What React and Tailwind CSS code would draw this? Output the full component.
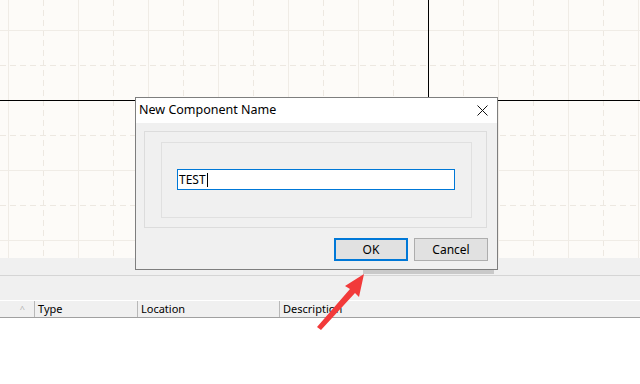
import React from "react";

function CanvasGrid() {
  const majors = [];
  const minors = [];
  for (let x = 8; x < 640; x += 70) majors.push(x);
  for (let x = 43; x < 640; x += 70) minors.push(x);
  const hMajors = [30, 100, 170, 240];
  const hMinors = [65, 135, 205];
  return (
    <svg className="absolute inset-0" width="640" height="258">
      {majors.map((x) => (
        <line key={"v" + x} x1={x + 0.5} y1="0" x2={x + 0.5} y2="258" stroke="#f0ece6" />
      ))}
      {minors.map((x) => (
        <line key={"m" + x} x1={x + 0.5} y1="0" x2={x + 0.5} y2="258" stroke="#ede8e1" strokeDasharray="6 4" />
      ))}
      {hMajors.map((y) => (
        <line key={"h" + y} x1="0" y1={y + 0.5} x2="640" y2={y + 0.5} stroke="#f0ece6" />
      ))}
      {hMinors.map((y) => (
        <line key={"n" + y} x1="0" y1={y + 0.5} x2="640" y2={y + 0.5} stroke="#ede8e1" strokeDasharray="6 4" />
      ))}
      <line x1="0" y1="100.5" x2="640" y2="100.5" stroke="#000" />
      <line x1="428.5" y1="0" x2="428.5" y2="100" stroke="#000" />
    </svg>
  );
}

function Dialog() {
  return (
    <div className="absolute left-[135px] top-[97px] w-[363px] h-[173px] border border-[#7e7e7e] bg-[#f0f0f0] flex flex-col">
      <div className="h-[25px] bg-white flex items-center justify-between pl-[3px] pr-[9px]">
        <span className="text-[12.5px] text-black">New Component Name</span>
        <svg width="11" height="11" viewBox="0 0 11 11">
          <path d="M0.5 0.5 L10.5 10.5 M10.5 0.5 L0.5 10.5" stroke="#111" strokeWidth="1" />
        </svg>
      </div>
      <div className="mt-2 ml-2 mr-[10px] h-[97px] border border-[#dcdcdc] bg-[#f0f0f0] pt-[10px] pl-4 pr-[14px]">
        <div className="h-[76px] border border-[#e0e0e0] bg-[#f0f0f0] pt-[26px] pl-[15px]">
          <div className="w-[278px] h-[21px] border border-[#0078d7] bg-white flex items-center pl-[1px]">
            <span className="text-[12px] text-black leading-none">TEST</span>
            <span className="w-[1px] h-[14px] bg-black ml-[1px]"></span>
          </div>
        </div>
      </div>
      <div className="flex justify-end gap-[6px] mt-[10px] pr-[9px]">
        <button className="w-[74px] h-[23px] bg-[#e1e1e1] border-2 border-[#0078d7] text-[12px] text-black">
          OK
        </button>
        <button className="w-[74px] h-[23px] bg-[#e1e1e1] border border-[#adadad] text-[12px] text-black">
          Cancel
        </button>
      </div>
    </div>
  );
}

function Arrow() {
  return (
    <svg className="absolute inset-0 pointer-events-none" width="640" height="384">
      <path d="M364 274 L359 297 L355 293 L321 330 L317 327 L350 289 L345 286 Z" fill="#f23a3a" />
    </svg>
  );
}

export default function App() {
  return (
    <div
      className="relative w-[640px] h-[384px] overflow-hidden bg-white flex flex-col"
      style={{ fontFamily: '"Noto Sans", "Open Sans", Arial, sans-serif' }}
    >
      <div className="relative h-[258px] bg-[#fdfbf8]">
        <CanvasGrid />
      </div>
      <div className="h-[18px] bg-[#f0f0f0] border-b border-[#d5d5d5]"></div>
      <div className="h-[25px] bg-[#f0f0f0] border-b border-white"></div>
      <div className="h-[17px] bg-[#f0f0f0] border-b border-[#a0a0a0] flex items-center text-[11px] text-black">
        <div className="w-[34px] flex justify-end pr-[9px] text-[9px] text-[#b0b0b0]">^</div>
        <div className="w-[103px] h-full border-l border-[#b8b8b8] pl-[3px] flex items-center">Type</div>
        <div className="w-[142px] h-full border-l border-[#b8b8b8] pl-[3px] flex items-center">Location</div>
        <div className="flex-1 h-full border-l border-[#b8b8b8] pl-[3px] flex items-center">Description</div>
      </div>
      <div className="flex-1 bg-white"></div>
      <div className="absolute left-[363px] top-[270px] w-[131px] h-[4px] bg-[#c9c9c9]"></div>
      <Dialog />
      <Arrow />
    </div>
  );
}
